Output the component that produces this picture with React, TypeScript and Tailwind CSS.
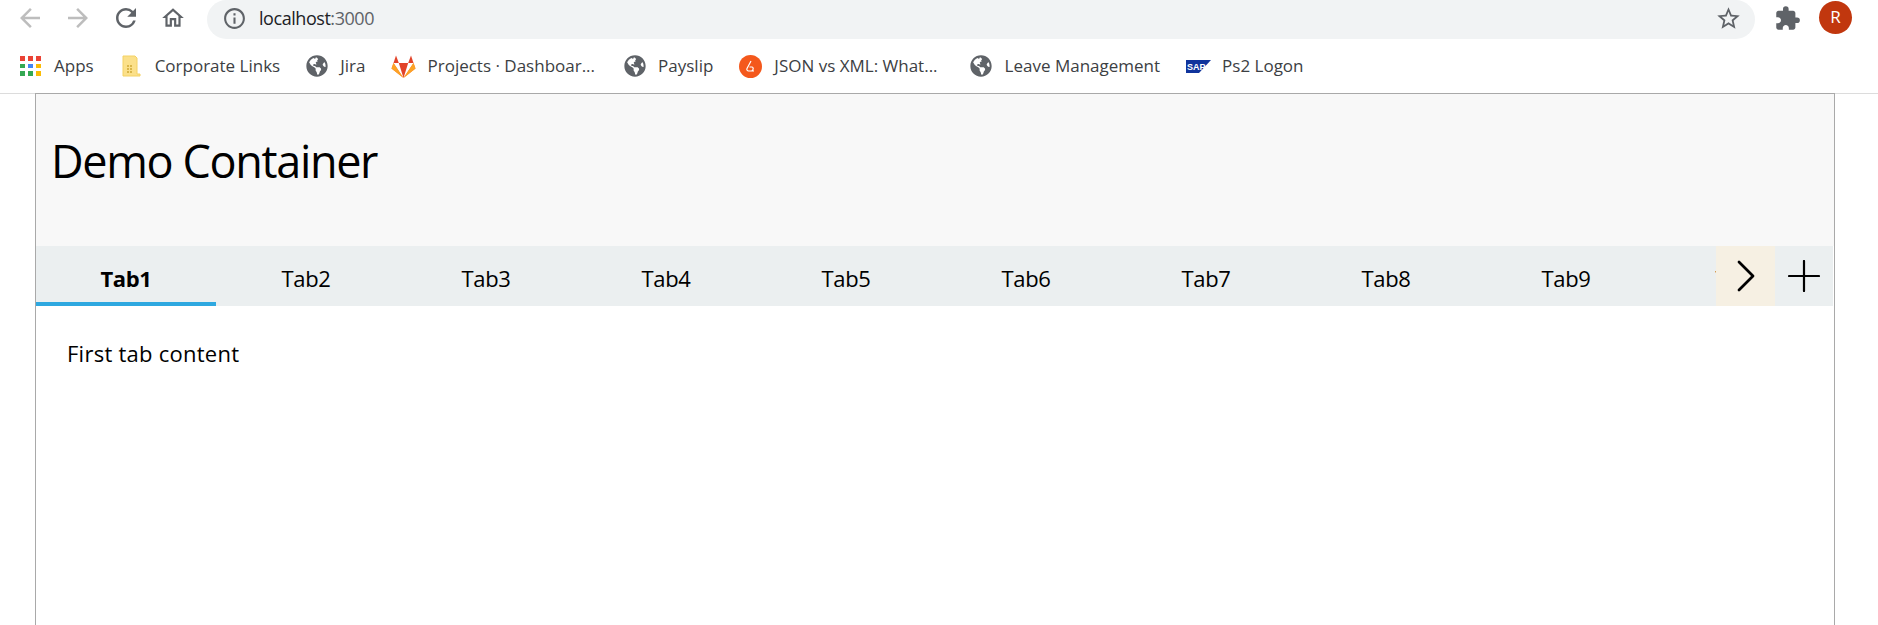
import { useState } from "react";
import { FaGlobeAmericas } from "react-icons/fa";
import { MdArrowBack, MdArrowForward, MdExtension, MdInfoOutline, MdOutlineHome, MdRefresh, MdStarBorder } from "react-icons/md";

const uiFont = { fontFamily: '"Open Sans", "Noto Sans", sans-serif' };

function AppsIcon() {
  const colors = ["#ea4335", "#ea4335", "#ea4335", "#34a853", "#4285f4", "#fbbc04", "#34a853", "#34a853", "#fbbc04"];
  return (
    <div className="grid h-[20px] w-[21px] shrink-0 grid-cols-3 gap-[3px]">
      {colors.map((c, i) => (
        <span key={i} className="block" style={{ backgroundColor: c }} />
      ))}
    </div>
  );
}

function CorporateIcon() {
  return (
    <svg width="19" height="22" viewBox="0 0 19 22" className="shrink-0">
      <path d="M1 1h12l2 2v16h3v2H1z" fill="#fbe08a" stroke="#f4d264" strokeWidth="1" />
      <path d="M5 10h2v2H5zM8 10h2v2H8zM5 13h2v2H5zM8 13h2v2H8zM5 16h2v2H5zM8 16h2v2H8z" fill="#d9b64a" />
    </svg>
  );
}

function GitlabIcon() {
  return (
    <svg width="25" height="23" viewBox="0 0 25 23" className="shrink-0">
      <path d="M12.5 23 0.5 13.5 2.5 8z" fill="#fc6d26" />
      <path d="M12.5 23 24.5 13.5 22.5 8z" fill="#fc6d26" />
      <path d="M12.5 23 7.8 8h9.4z" fill="#e24329" />
      <path d="M2.5 8 5 0.5 7.8 8z" fill="#e24329" />
      <path d="M22.5 8 20 0.5 17.2 8z" fill="#e24329" />
      <path d="M0.5 13.5 2.5 8 12.5 23z" fill="#fca326" />
      <path d="M24.5 13.5 22.5 8 12.5 23z" fill="#fca326" />
    </svg>
  );
}

function JsonIcon() {
  return (
    <svg width="23" height="23" viewBox="0 0 23 23" className="shrink-0">
      <circle cx="11.5" cy="11.5" r="11.5" fill="#f4581c" />
      <path d="M12 6 8 13.5c-.6 1.4.3 2.5 1.6 2.5H15M10.5 12H13c1.5 0 1.8 3.2-.4 4" fill="none" stroke="#fff" strokeWidth="1.2" />
    </svg>
  );
}

function SapIcon() {
  return (
    <svg width="25" height="13" viewBox="0 0 25 13" className="shrink-0">
      <path d="M0 0h25L13 13H0z" fill="#10349c" />
      <text x="1" y="10" fontSize="9" fontWeight="700" fill="#fff" fontFamily="Liberation Sans, sans-serif">SAP</text>
    </svg>
  );
}

function Bookmark({ icon, label, w }: { icon: React.ReactNode; label: string; w: string }) {
  return (
    <div className="flex items-center gap-[13px]">
      <span className="flex w-[21px] shrink-0 justify-center">{icon}</span>
      <span className={`whitespace-nowrap text-[17px] text-[#3c4043] ${w}`}>{label}</span>
    </div>
  );
}

function BrowserBar() {
  return (
    <div className="h-[94px] border-b border-[#dcdcdc] bg-white" style={uiFont}>
      <div className="flex h-[40px] items-center">
        <div className="flex w-[207px] items-center pb-[4px] pl-[15px]">
          <MdArrowBack className="h-[30px] w-[30px] text-[#bdbdbd]" />
          <MdArrowForward className="ml-[18px] h-[30px] w-[30px] text-[#bdbdbd]" />
          <MdRefresh className="ml-[18px] h-[30px] w-[30px] text-[#5f6368]" />
          <MdOutlineHome className="ml-[19px] h-[26px] w-[26px] text-[#5f6368]" />
        </div>
        <div className="mb-px flex h-[39px] w-[1548px] items-center rounded-full bg-[#f1f3f4] pb-[2px] pl-[15px] pr-[13px]">
          <MdInfoOutline className="h-[25px] w-[25px] text-[#5f6368]" />
          <span className="ml-[12px] text-[18px] tracking-[-0.45px] text-[#202124]">
            localhost<span className="text-[#5f6368]">:3000</span>
          </span>
          <MdStarBorder className="ml-auto h-[27px] w-[27px] text-[#5f6368]" />
        </div>
        <MdExtension className="mb-[3px] ml-[19px] h-[27px] w-[27px] text-[#5f6368]" />
        <div className="mb-[6px] ml-[18px] flex h-[33px] w-[33px] items-center justify-center rounded-full bg-[#c1370e] text-[17px] text-white">R</div>
      </div>
      <div className="flex h-[53px] items-center pb-[1px] pl-[20px]">
        <Bookmark icon={<AppsIcon />} label="Apps" w="mr-[27px]" />
        <Bookmark icon={<CorporateIcon />} label="Corporate Links" w="mr-[26px]" />
        <Bookmark icon={<FaGlobeAmericas className="h-[22px] w-[22px] shrink-0 text-[#5f6368]" />} label="Jira" w="mr-[28px]" />
        <Bookmark icon={<GitlabIcon />} label="Projects · Dashboar..." w="mr-[29px]" />
        <Bookmark icon={<FaGlobeAmericas className="h-[22px] w-[22px] shrink-0 text-[#5f6368]" />} label="Payslip" w="mr-[27px]" />
        <Bookmark icon={<JsonIcon />} label="JSON vs XML: What..." w="mr-[33px]" />
        <Bookmark icon={<FaGlobeAmericas className="h-[22px] w-[22px] shrink-0 text-[#5f6368]" />} label="Leave Management" w="mr-[28px]" />
        <Bookmark icon={<SapIcon />} label="Ps2 Logon" w="" />
      </div>
    </div>
  );
}

const tabs = ["Tab1", "Tab2", "Tab3", "Tab4", "Tab5", "Tab6", "Tab7", "Tab8", "Tab9", "Tab10"];

export default function App() {
  const [active, setActive] = useState(0);

  return (
    <div className="h-[625px] overflow-hidden bg-white">
      <BrowserBar />
      <div className="-mt-px ml-[35px] h-[532px] w-[1800px] border-x border-t border-[#a9a9a9] text-black" style={uiFont}>
        <div className="flex h-[152px] items-center bg-[#f8f8f8] pb-[20px] pl-[15px]">
          <h1 className="text-[45px] leading-none tracking-[-1.35px]">Demo Container</h1>
        </div>
        <div className="mr-px flex h-[60px] bg-[#ebeff0]">
          <div className="flex min-w-0 flex-1 overflow-hidden">
            {tabs.map((t, i) => (
              <button
                key={t}
                onClick={() => setActive(i)}
                className={`h-full w-[180px] shrink-0 border-b-4 pt-[9px] text-[22px] tracking-[-0.35px] ${
                  active === i ? "border-[#2ea8e0] font-bold" : "border-transparent"
                }`}
              >
                {t}
              </button>
            ))}
          </div>
          <button className="flex h-full w-[59px] items-center justify-center bg-[#f6f0e3]">
            <svg width="20" height="32" viewBox="0 0 20 32" fill="none" stroke="black" strokeWidth="2.8" strokeLinecap="round" strokeLinejoin="round">
              <path d="M3 2l14 14L3 30" />
            </svg>
          </button>
          <button className="flex h-full w-[58px] items-center justify-center">
            <svg width="32" height="32" viewBox="0 0 32 32" stroke="black" strokeWidth="2.2" strokeLinecap="round">
              <path d="M16 1v30M1 16h30" />
            </svg>
          </button>
        </div>
        <div className="pl-[31px] pt-[32px] text-[22px] leading-[30px] tracking-[0.25px]">First tab content</div>
      </div>
    </div>
  );
}
